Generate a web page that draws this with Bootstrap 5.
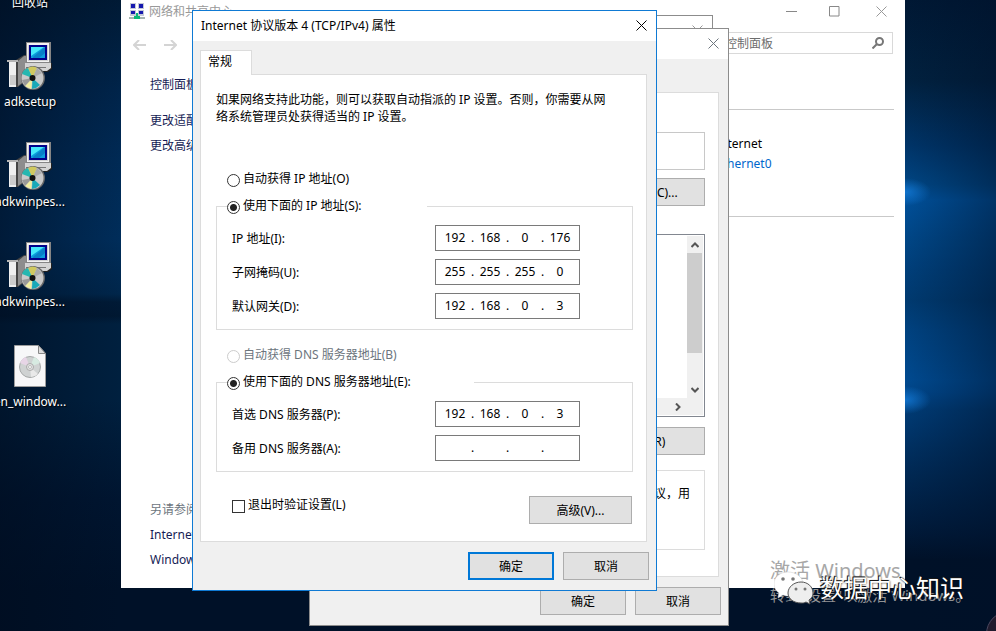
<!DOCTYPE html>
<html lang="zh-CN">
<head>
<meta charset="utf-8">
<meta name="viewport" content="width=device-width, initial-scale=1">
<title>Internet 协议版本 4 (TCP/IPv4) 属性</title>
<link href="https://cdn.jsdelivr.net/npm/bootstrap@5.3.0/dist/css/bootstrap.min.css" rel="stylesheet">
<style>
body { font: 12px/17px "Noto Sans", "Noto Sans CJK SC", sans-serif; color: #000; }
svg { display: block; flex: none; }
.desktop {
  height: 100vh; background-color: #001430;
  background-image:
    radial-gradient(ellipse 26px 14px at calc(100% - 91px) 192px, rgba(20,125,220,.8), transparent 100%),
    radial-gradient(ellipse 26px 14px at calc(100% - 91px) 400px, rgba(20,125,220,.8), transparent 100%),
    linear-gradient(90deg, transparent calc(100% - 91px), rgba(0,16,40,.45) 100%),
    linear-gradient(#001834 0, #01213f 80px, #003468 145px, #004684 185px, #00509a 200px, #004788 235px, #003f7a 270px, #003a70 300px, #004280 330px, #004a90 380px, #00468a 392px, #003b75 410px, #002b58 465px, #001a3a 530px, #001128 560px, #001128 100%),
    linear-gradient(90deg, rgba(0,12,30,.55), transparent 121px),
    linear-gradient(#001a35 0, #00244a 90px, #002a55 160px, #002d5a 240px, #00264b 294px, #001a36 302px, #001832 316px, #00203f 324px, #00203f 400px, #001530 500px, #001128 590px, #001128 100%);
  background-position: 0 0, 0 0, 0 0, 100% 0, 0 0, 0 0;
  background-size: auto, auto, auto, 91px 100%, 121px 100%, 100% 100%;
  background-repeat: no-repeat;
}
.shortcuts { left: -8px; top: -58px; width: 76px; color: #fff; text-shadow: 1px 1px 1px #000; }
.shortcut { height: 100px; }
.shortcut span { margin-top: 3px; }
.shortcut-bin { padding-bottom: 31px; }
.win { background: #fff; }
.explorer { left: 121px; right: 91px; top: 0; bottom: 43px; color: #151c55; }
.explorer-title { height: 22px; padding: 0 18px 0 8px; color: #999; }
.explorer-nav { height: 42px; padding: 10px 12px 0; }
.search-box { width: 200px; height: 22px; border: 1px solid #d9d9d9; padding: 0 8px 0 6px; }
.search-box input { color: #6d6d6d; padding: 0 0 0 1px; width: 150px; border: 0; outline: 0; }
.search-box input::placeholder { color: #6d6d6d; }
.explorer a { text-decoration: none; color: #151c55; }
.side { padding: 12px 0 20px 29px; gap: 8px; }
.side-gap { margin-bottom: 11px; }
.network { width: 178px; margin: 45px 11px 0 0; height: 108px; border: solid #c9c9c9; border-width: 1px 0; padding: 25px 0 0; color: #000; }
.explorer .network a { color: #0066cc; margin-top: 3px; }
.dialog { background: #f0f0f0; border: 1px solid #8c8c8c; }
.dialog-title { height: 30px; background: #fff; padding: 0 9px 2px 8px; }
.icon-btn { border: 0; padding: 0; background: none; color: inherit; }
.status-dialog { left: 300px; top: 15px; width: 413px; height: 500px; color: #999; }
.ether-dialog { left: 309px; top: 28px; width: 420px; }
.ip-dialog { left: 192px; top: 10px; width: 465px; border-color: #0f7ad4; }
.dialog-body { padding: 9px 9px 0 7px; }
.sheet-tab { width: 52px; height: 25px; border: 1px solid #dcdcdc; border-bottom: 0; background: #fff; margin-bottom: -1px; padding: 2px 0 0 7px; z-index: 1; }
.sheet { background: #fff; border: 1px solid #dcdcdc; }
.ip-dialog .sheet { padding: 16px 13px 17px 15px; }
.ether-dialog .dialog-body { padding-top: 33px; }
.ether-dialog .sheet { padding: 39px 13px 26px 15px; }
.dialog-footer { padding: 10px 7px; gap: 9px; }
.win-btn { width: 86px; height: 28px; border: 1px solid #adadad; background: #e1e1e1; color: #000; padding: 0; }
.win-btn.wide { width: 103px; }
.win-btn.wider { width: 118px; }
.win-btn.default { border: 2px solid #0078d7; }
.intro { margin: 0 0 45px; }
.choice { height: 19px; gap: 3px; }
.choice input { appearance: none; flex: none; width: 13px; height: 13px; border: 1px solid #333; margin: 4px 0 0; background: #fff; }
.choice input[type=radio] { border-radius: 50%; }
.choice input:checked { background: radial-gradient(circle, #222 0 3px, #fff 4px); }
.choice input:disabled { border-color: #ccc; }
.auto-row { padding-left: 11px; margin-bottom: 8px; }
.addresses { border: 1px solid #dcdcdc; padding: 9px 52px 10px 15px; margin: 0 0 16px; }
.addresses legend { float: none; width: 200px; margin: 0 0 0 -5px; padding: 0; font-size: 12px; line-height: 17px; }
.addresses legend.long { width: 247px; }
.field-row + .field-row { margin-top: 8px; }
.octets { width: 145px; height: 26px; border: 1px solid #7a7a7a; padding: 0 5px 2px; }
.octets input { width: 28px; border: 0; padding: 0; text-align: center; outline: 0; background: none; color: #000; }
.octets i { width: 7px; font-style: normal; text-align: center; }
.bottom-row { margin-top: 24px; padding-right: 1px; }
.bottom-row .choice { padding-left: 16px; }
.adapter { height: 38px; border: 1px solid #c8c8c8; margin-bottom: 8px; }
.items { height: 183px; border: 1px solid #828790; margin: 28px 0 10px; padding: 1px; }
.vbar { width: 16px; background: #f0f0f0; }
.thumb { height: 100px; width: 15px; background: #cdcdcd; }
.arrow { width: 16px; height: 17px; }
.hbar { height: 17px; background: #f0f0f0; padding-right: 17px; }
.note { height: 80px; border: 1px solid #dcdcdc; margin-top: 15px; padding: 14px 14px 0 0; }
.activation { right: 32px; bottom: 26px; width: 194px; color: #a0a0a0; opacity: .92; font-size: 15px; line-height: 20px; }
.activation strong { font-weight: 400; font-size: 20px; line-height: 28px; }
.channel { right: 32px; bottom: 25px; color: #fff; font-size: 24px; line-height: 36px; text-shadow: 0 0 2px #000, -1px -1px 0 #222; }
.avatar { right: -36px; bottom: -26px; width: 46px; height: 46px; background: #211b2d; border: 1px solid #4c4860; }
</style>
<script src="https://cdn.jsdelivr.net/npm/bootstrap@5.3.0/dist/js/bootstrap.bundle.min.js"></script>
</head>
<body>
<svg width="0" height="0" class="position-absolute" aria-hidden="true">
  <symbol id="close" viewBox="0 0 11 11"><path d="M.5.5l10 10M10.500.5l-10 10" fill="none" stroke="currentColor"/></symbol>
  <symbol id="setup" viewBox="0 0 48 48">
    <path d="M1 18h9l8-5h2v26l-8 6H3V20H1z" fill="#444"/>
    <path d="M12 19l6-5h2v24l-8 6z" fill="#8d8d8d"/>
    <path d="M3 20h7v25H3z" fill="#efefef"/>
    <path d="M4 33h6v10H4z" fill="#ccc"/>
    <path d="M1 18h11v2H1z" fill="#b4b4b4"/>
    <path d="M20 0h25v21H20z" fill="#858585"/>
    <path d="M21 1h22v19H21z" fill="#f2f2f2"/>
    <path d="M22 3h20v16H22z" fill="#d0d0d0"/>
    <path d="M23 3h18v15H23z" fill="#00008a"/>
    <path d="M25 5h14v11H25z" fill="#0c9cdc"/>
    <path d="M25 5h13L25 14z" fill="#46e8fa"/>
    <path d="M27 15L38 6h1v5l-6 5h-6z" fill="#087fc8"/>
    <path d="M19 21h27v6l-4 3H19z" fill="#202020"/>
    <path d="M19 21h26v5l-4 3H19z" fill="#d4d4d4"/>
    <path d="M20 25h20v1H20z" fill="#777"/>
    <circle cx="27" cy="36" r="12" fill="#666"/>
    <circle cx="26.500" cy="36" r="11" fill="#c9c9c9"/>
    <path d="M26.500 36L22 26q5-3 9 0z" fill="#d0c95f"/>
    <path d="M26.500 36L16 32q1-4 6-6z" fill="#25b7b0"/>
    <path d="M26.500 36L31 26l5 5z" fill="#aaa"/>
    <path d="M26.500 36L25 47l-6-3z" fill="#f3efa0"/>
    <path d="M26.500 36L34 43l-4 3-4 1z" fill="#18a9b8"/>
    <path d="M26.500 36L16 38l3 6z" fill="#999"/>
    <circle cx="26.500" cy="36" r="3" fill="#111"/>
  </symbol>
</svg>

<main class="desktop position-relative overflow-hidden">
  <nav class="shortcuts position-absolute text-center text-nowrap">
    <div class="shortcut shortcut-bin d-flex flex-column align-items-center justify-content-end"><span>回收站</span></div>
    <div class="shortcut d-flex flex-column align-items-center"><svg width="48" height="48"><use href="#setup"/></svg><span>adksetup</span></div>
    <div class="shortcut d-flex flex-column align-items-center"><svg width="48" height="48"><use href="#setup"/></svg><span>adkwinpes...</span></div>
    <div class="shortcut d-flex flex-column align-items-center"><svg width="48" height="48"><use href="#setup"/></svg><span>adkwinpes...</span></div>
    <div class="shortcut d-flex flex-column align-items-center">
      <svg width="48" height="48" viewBox="0 0 48 48">
        <path d="M8.500 3.500h24l7 8v33h-31z" fill="#f7f7f8" stroke="#9c9c9c"/>
        <path d="M32.500 3.500v8h7z" fill="#ddd" stroke="#888"/>
        <circle cx="24" cy="25" r="10.500" fill="#cfd2d2" stroke="#a5a8a8"/>
        <path d="M24 25L14 21q2-5 6-6z" fill="#e7d5e6"/><path d="M24 25l4-10q5 2 6 6z" fill="#d7eae1"/><path d="M24 25l8 7q-3 3-7 3z" fill="#e9e9e9"/>
        <circle cx="24" cy="25" r="3.500" fill="#e4e4e4" stroke="#aaa"/><circle cx="24" cy="25" r="1.500" fill="#fff" stroke="#bbb"/>
      </svg><span>en_window...</span></div>
  </nav>

  <section class="win explorer position-absolute d-flex flex-column">
    <header class="explorer-title d-flex align-items-center">
      <svg width="16" height="17" viewBox="0 0 16 17">
        <path d="M1 0h6v6H1zM9 0h6v6H9zM1 7h6v6H1zM9 7h6v6H9z" fill="#c3c8d6"/>
        <path d="M2 1h4v4H2zM10 1h4v4h-4zM2 8h4v3H2zM10 8h4v3h-4z" fill="#1519ae"/>
        <path d="M0 14h16v2H0z" fill="#a5b5b0"/><path d="M7 10h2v3h2v3H5v-3h2z" fill="#08b878"/>
      </svg>
      <span class="ms-1 me-auto">网络和共享中心</span>
      <button class="icon-btn" aria-label="最小化"><svg width="11" height="11"><path d="M0 5.500h11" stroke="#888"/></svg></button>
      <button class="icon-btn mx-4 px-2" aria-label="最大化"><svg width="11" height="11"><path d="M.5.5h9.500v9.500H.5z" fill="none" stroke="#888"/></svg></button>
      <button class="icon-btn ps-1" aria-label="关闭"><svg width="11" height="11"><use href="#close"/></svg></button>
    </header>
    <div class="explorer-nav d-flex align-items-start">
      <div class="d-flex pt-2">
        <button class="icon-btn" aria-label="后退"><svg width="14" height="10" viewBox="0 0 14 10"><path d="M6 0L1 5l5 5M1 5h12" fill="none" stroke="#d4d4d4" stroke-width="2"/></svg></button>
        <button class="icon-btn ms-3" aria-label="前进"><svg width="14" height="10" viewBox="0 0 14 10"><path d="M8 0l5 5-5 5M13 5H1" fill="none" stroke="#d4d4d4" stroke-width="2"/></svg></button>
      </div>
      <div class="search-box ms-auto d-flex align-items-center justify-content-between">
        <input type="text" aria-label="搜索控制面板" placeholder="搜索控制面板">
        <svg width="12" height="12" viewBox="0 0 12 12"><circle cx="7.500" cy="4.500" r="3.500" fill="none" stroke="#777" stroke-width="2"/><path d="M5 7L.5 11.500" stroke="#777" stroke-width="2"/></svg>
      </div>
    </div>
    <div class="d-flex flex-grow-1">
      <nav class="side d-flex flex-column text-nowrap">
        <a href="#" class="side-gap">控制面板主页</a>
        <a href="#">更改适配器设置</a>
        <a href="#">更改高级共享设置</a>
        <span class="mt-auto text-secondary">另请参阅</span>
        <a href="#">Internet 选项</a>
        <a href="#">Windows 防火墙</a>
      </nav>
      <div class="network ms-auto d-flex flex-column">
        <span>Internet</span>
        <a href="#">Ethernet0</a>
      </div>
    </div>
  </section>

  <section class="dialog status-dialog position-absolute">
    <header class="dialog-title d-flex align-items-center justify-content-end">
      <button class="icon-btn" aria-label="关闭"><svg width="11" height="11"><use href="#close"/></svg></button>
    </header>
  </section>

  <section class="dialog ether-dialog position-absolute">
    <header class="dialog-title d-flex align-items-center justify-content-end text-secondary">
      <button class="icon-btn" aria-label="关闭"><svg width="11" height="11"><use href="#close"/></svg></button>
    </header>
    <div class="dialog-body">
      <div class="sheet">
        <div class="adapter"></div>
        <button class="win-btn wide d-block ms-auto">配置(C)...</button>
        <div class="items d-flex flex-column">
          <div class="d-flex flex-grow-1 justify-content-end">
            <div class="vbar d-flex flex-column">
              <span class="arrow d-flex align-items-center justify-content-center"><svg width="8" height="6" viewBox="0 0 8 6"><path d="M.5 5L4 1.500 7.500 5" fill="none" stroke="#555" stroke-width="2"/></svg></span>
              <span class="thumb"></span>
              <span class="arrow d-flex align-items-center justify-content-center mt-auto"><svg width="8" height="6" viewBox="0 0 8 6"><path d="M.5 1L4 4.500 7.500 1" fill="none" stroke="#555" stroke-width="2"/></svg></span>
            </div>
          </div>
          <div class="hbar d-flex justify-content-end"><span class="arrow d-flex align-items-center justify-content-center"><svg width="6" height="8" viewBox="0 0 6 8"><path d="M1 .5L4.500 4 1 7.500" fill="none" stroke="#555" stroke-width="2"/></svg></span></div>
        </div>
        <button class="win-btn wider d-block ms-auto">属性(R)</button>
        <div class="note text-end">广域网络协议，用</div>
      </div>
    </div>
    <footer class="dialog-footer d-flex justify-content-end">
      <button class="win-btn">确定</button>
      <button class="win-btn">取消</button>
    </footer>
  </section>

  <form class="dialog ip-dialog position-absolute">
    <header class="dialog-title d-flex align-items-center justify-content-between">
      <span>Internet 协议版本 4 (TCP/IPv4) 属性</span>
      <button type="button" class="icon-btn" aria-label="关闭"><svg width="11" height="11"><use href="#close"/></svg></button>
    </header>
    <div class="dialog-body">
      <div class="sheet-tab position-relative">常规</div>
      <div class="sheet">
        <p class="intro text-nowrap">如果网络支持此功能，则可以获取自动指派的 IP 设置。否则，你需要从网<br>络系统管理员处获得适当的 IP 设置。</p>
        <div class="choice auto-row d-flex"><input type="radio" name="ip" id="ip-auto"><label for="ip-auto">自动获得 IP 地址(O)</label></div>
        <fieldset class="addresses">
          <legend><span class="choice d-flex"><input type="radio" name="ip" id="ip-manual" checked><label for="ip-manual">使用下面的 IP 地址(S):</label></span></legend>
          <div class="field-row d-flex align-items-center justify-content-between">
            <label for="addr1">IP 地址(I):</label>
            <div class="octets d-flex align-items-center"><input id="addr1" value="192"><i>.</i><input aria-label="IP 2" value="168"><i>.</i><input aria-label="IP 3" value="0"><i>.</i><input aria-label="IP 4" value="176"></div>
          </div>
          <div class="field-row d-flex align-items-center justify-content-between">
            <label for="mask1">子网掩码(U):</label>
            <div class="octets d-flex align-items-center"><input id="mask1" value="255"><i>.</i><input aria-label="掩码 2" value="255"><i>.</i><input aria-label="掩码 3" value="255"><i>.</i><input aria-label="掩码 4" value="0"></div>
          </div>
          <div class="field-row d-flex align-items-center justify-content-between">
            <label for="gate1">默认网关(D):</label>
            <div class="octets d-flex align-items-center"><input id="gate1" value="192"><i>.</i><input aria-label="网关 2" value="168"><i>.</i><input aria-label="网关 3" value="0"><i>.</i><input aria-label="网关 4" value="3"></div>
          </div>
        </fieldset>
        <div class="choice auto-row d-flex text-secondary"><input type="radio" name="dns" id="dns-auto" disabled><label for="dns-auto">自动获得 DNS 服务器地址(B)</label></div>
        <fieldset class="addresses">
          <legend class="long"><span class="choice d-flex"><input type="radio" name="dns" id="dns-manual" checked><label for="dns-manual">使用下面的 DNS 服务器地址(E):</label></span></legend>
          <div class="field-row d-flex align-items-center justify-content-between">
            <label for="dnsa1">首选 DNS 服务器(P):</label>
            <div class="octets d-flex align-items-center"><input id="dnsa1" value="192"><i>.</i><input aria-label="首选 2" value="168"><i>.</i><input aria-label="首选 3" value="0"><i>.</i><input aria-label="首选 4" value="3"></div>
          </div>
          <div class="field-row d-flex align-items-center justify-content-between">
            <label for="dnsb1">备用 DNS 服务器(A):</label>
            <div class="octets d-flex align-items-center"><input id="dnsb1"><i>.</i><input aria-label="备用 2"><i>.</i><input aria-label="备用 3"><i>.</i><input aria-label="备用 4"></div>
          </div>
        </fieldset>
        <div class="bottom-row d-flex justify-content-between align-items-start">
          <div class="choice d-flex"><input type="checkbox" id="validate"><label for="validate">退出时验证设置(L)</label></div>
          <button type="button" class="win-btn wide">高级(V)...</button>
        </div>
      </div>
    </div>
    <footer class="dialog-footer d-flex justify-content-end">
      <button type="button" class="win-btn default">确定</button>
      <button type="button" class="win-btn">取消</button>
    </footer>
  </form>

  <div class="activation position-absolute d-flex flex-column text-nowrap"><strong>激活 Windows</strong><span>转到"设置"以激活 Windows。</span></div>
  <div class="channel position-absolute d-flex align-items-center text-nowrap">
    <svg width="46" height="34" viewBox="0 0 46 34">
      <path d="M14 1C6 1 0 6 0 13c0 4 2 7 5 9l-1 5 5-3c2 1 4 1 6 1 8 0 14-5 14-12S22 1 14 1z" fill="#fff" stroke="#ccc" stroke-width=".5"/>
      <path d="M27 11c-7 0-13 5-13 11s6 10 13 10c2 0 3 0 5-1l4 2-1-4c3-2 4-4 4-7 0-6-5-11-12-11z" fill="#eee" stroke="#555"/>
      <circle cx="9" cy="8" r="1.800" fill="#777"/><circle cx="19" cy="8" r="1.800" fill="#777"/><circle cx="22" cy="18" r="1.500" fill="#777"/><circle cx="31" cy="18" r="1.500" fill="#777"/>
    </svg>
    <span>数据中心知识</span>
  </div>
  <div class="avatar position-absolute rounded-circle"></div>
</main>
</body>
</html>
